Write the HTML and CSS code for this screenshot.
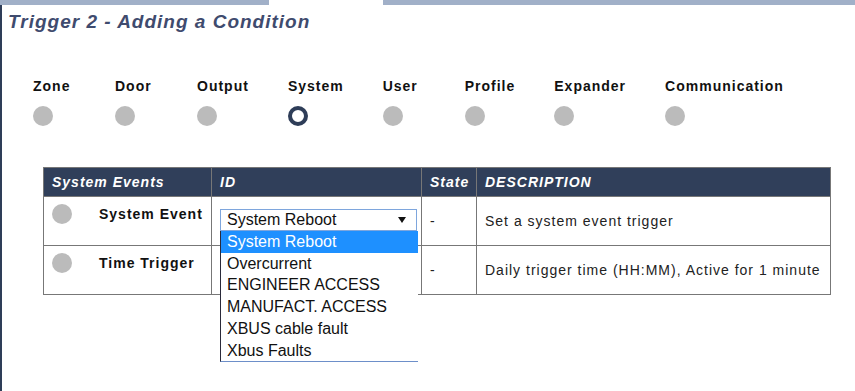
FILE: index.html
```html
<!DOCTYPE html>
<html>
<head>
<meta charset="utf-8">
<link rel="stylesheet" href="styles.css">
</head>
<body>
<div class="topbar"><div class="seg seg-left"></div><div class="seg-gap"></div><div class="seg seg-right"></div></div>
<div class="page">
  <h1 class="title">Trigger 2 - Adding a Condition</h1>
  <ul class="steps">
    <li class="step"><span class="step-label">Zone</span><span class="dot"></span></li>
    <li class="step"><span class="step-label">Door</span><span class="dot"></span></li>
    <li class="step"><span class="step-label">Output</span><span class="dot"></span></li>
    <li class="step"><span class="step-label">System</span><span class="dot dot-active"></span></li>
    <li class="step"><span class="step-label">User</span><span class="dot"></span></li>
    <li class="step"><span class="step-label">Profile</span><span class="dot"></span></li>
    <li class="step"><span class="step-label">Expander</span><span class="dot"></span></li>
    <li class="step"><span class="step-label">Communication</span><span class="dot"></span></li>
  </ul>
  <table class="events">
    <colgroup>
      <col class="w-name">
      <col class="w-id">
      <col class="w-state">
      <col class="w-desc">
    </colgroup>
    <thead>
      <tr>
        <th>System Events</th>
        <th>ID</th>
        <th>State</th>
        <th>DESCRIPTION</th>
      </tr>
    </thead>
    <tbody>
      <tr>
        <td class="c-name"><div class="name-wrap"><span class="dot small"></span><span class="name">System Event</span></div></td>
        <td class="c-id">
          <div class="select-wrap">
            <div class="select"><span class="select-value">System Reboot</span><span class="arrow"></span></div>
            <ul class="options">
              <li class="opt opt-active">System Reboot</li>
              <li class="opt">Overcurrent</li>
              <li class="opt">ENGINEER ACCESS</li>
              <li class="opt">MANUFACT. ACCESS</li>
              <li class="opt">XBUS cable fault</li>
              <li class="opt">Xbus Faults</li>
            </ul>
          </div>
        </td>
        <td class="c-state">-</td>
        <td class="c-desc">Set a system event trigger</td>
      </tr>
      <tr>
        <td class="c-name"><div class="name-wrap"><span class="dot small"></span><span class="name">Time Trigger</span></div></td>
        <td class="c-id"></td>
        <td class="c-state">-</td>
        <td class="c-desc">Daily trigger time (HH:MM), Active for 1 minute</td>
      </tr>
    </tbody>
  </table>
</div>
</body>
</html>
```

FILE: styles.css
```css
html, body {
  margin: 0;
  padding: 0;
  background: #ffffff;
}
body {
  font-family: "Liberation Sans", Arial, sans-serif;
  letter-spacing: 1px;
  color: #222222;
}
.topbar {
  display: flex;
  height: 5px;
}
.seg {
  background: #a1b0c8;
}
.seg-left {
  width: 269px;
}
.seg-gap {
  width: 114px;
}
.seg-right {
  flex: 1;
}
.page {
  border-left: 2px solid #2e3d58;
  min-height: 386px;
  box-sizing: border-box;
  padding: 0 0 0 6px;
}
.title {
  margin: 0;
  padding-top: 5px;
  font-size: 19px;
  line-height: 23px;
  font-weight: bold;
  font-style: italic;
  color: #3f4b6e;
}
.steps {
  list-style: none;
  margin: 0;
  padding: 45px 0 0 25px;
  display: flex;
  gap: 39px;
}
.step {
  display: flex;
  flex-direction: column;
  min-width: 43px;
}
.step-label {
  font-size: 14px;
  font-weight: bold;
  line-height: 16px;
  color: #111111;
}
.dot {
  display: block;
  width: 20px;
  height: 20px;
  border-radius: 50%;
  background: #bbbbbb;
  box-sizing: border-box;
}
.steps .dot {
  margin-top: 12px;
}
.dot-active {
  background: #ffffff;
  border: 4px solid #2e3d58;
}
.events {
  margin: 41px 0 0 35px;
  width: 788px;
  table-layout: fixed;
  border-collapse: collapse;
  font-size: 14px;
}
.w-name {
  width: 168px;
}
.w-id {
  width: 210px;
}
.w-state {
  width: 55px;
}
.events th {
  background: #303f5a;
  color: #ffffff;
  font-style: italic;
  font-weight: bold;
  text-align: left;
  height: 29px;
  padding: 0 8px;
  border: 1px solid #777777;
  box-sizing: border-box;
}
.events td {
  border: 1px solid #777777;
  height: 49px;
  box-sizing: border-box;
  padding: 0 8px;
  vertical-align: middle;
  white-space: nowrap;
}
.events .c-desc {
  padding-right: 4px;
}
.events td.c-name {
  vertical-align: top;
  padding-top: 7px;
}
.name-wrap {
  display: flex;
  align-items: center;
  gap: 27px;
}
.name {
  font-weight: bold;
  color: #111111;
}
.events td.c-id {
  vertical-align: top;
  padding-top: 12px;
}
.select-wrap {
  position: relative;
  width: 197px;
}
.select {
  height: 22px;
  box-sizing: border-box;
  border: 1px solid #7ea6dd;
  display: flex;
  align-items: center;
  justify-content: space-between;
  padding: 0 10px 0 6px;
  background: #ffffff;
}
.select-value {
  font-size: 16px;
  letter-spacing: 0;
  color: #111111;
}
.arrow {
  width: 0;
  height: 0;
  border-left: 4px solid transparent;
  border-right: 4px solid transparent;
  border-top: 6px solid #111111;
}
.options {
  position: absolute;
  top: 22px;
  left: 0;
  width: 198px;
  margin: 0;
  padding: 0;
  list-style: none;
  background: #ffffff;
  border-left: 1px solid #2a2a3a;
  border-bottom: 1px solid #6d8fc9;
  box-sizing: border-box;
  z-index: 5;
}
.opt {
  font-size: 16px;
  letter-spacing: 0;
  line-height: 21.7px;
  padding-left: 6px;
  color: #111111;
}
.opt-active {
  background: #1e90ff;
  color: #ffffff;
}
```
